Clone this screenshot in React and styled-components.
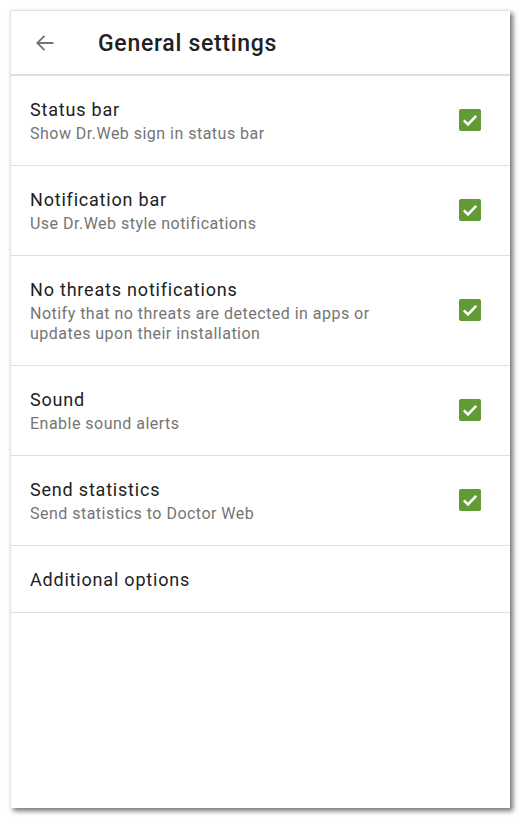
import React from "react";
import styled, { createGlobalStyle } from "styled-components";

const GlobalStyle = createGlobalStyle`
  html, body {
    margin: 0;
    padding: 0;
    background: #ffffff;
  }
  body {
    font-family: Roboto, "Noto Sans", sans-serif;
  }
`;

const Page = styled.div`
  padding: 10px 11px 11px 10px;
`;

const Panel = styled.div`
  box-sizing: border-box;
  width: 500px;
  height: 798px;
  background: #fff;
  border-top: 1px solid #e2e2e2;
  border-left: 1px solid #e2e2e2;
  box-shadow: 3px 3px 5px rgba(0, 0, 0, 0.55);
  display: flex;
  flex-direction: column;
`;

const Header = styled.header`
  box-sizing: border-box;
  height: 65px;
  padding-top: 1px;
  display: flex;
  align-items: center;
  border-bottom: 2px solid #dedede;
`;

const BackButton = styled.button`
  border: 0;
  background: none;
  padding: 0;
  margin: 0 0 0 21px;
  width: 26px;
  height: 26px;
  display: flex;
  align-items: center;
  justify-content: center;
  color: #757575;
`;

const Title = styled.h1`
  margin: 0 0 0 40px;
  font-size: 23px;
  font-weight: 500;
  color: #212121;
  letter-spacing: 0.7px;
`;

const Row = styled.div`
  display: flex;
  align-items: center;
  padding: 20px 29px ${(p) => (p.$compact ? "18px" : "21px")} 19px;
  border-bottom: 1px solid #e0e0e0;
`;

const Texts = styled.div`
  flex: 1;
  padding-right: 60px;
`;

const ItemTitle = styled.div`
  font-size: 18px;
  line-height: 28px;
  color: #212121;
  letter-spacing: 0.8px;
`;

const ItemSub = styled.div`
  font-size: 16px;
  line-height: 20px;
  color: #757575;
  letter-spacing: 0.48px;
`;

const Check = () => (
  <svg width="22" height="22" viewBox="0 0 22 22">
    <rect x="0" y="0" width="22" height="22" rx="2" fill="#629a35" />
    <path
      d="M4.8 11.4 L9 15.4 L17.2 6.8"
      fill="none"
      stroke="#fff"
      strokeWidth="2.6"
    />
  </svg>
);

const items = [
  { title: "Status bar", sub: "Show Dr.Web sign in status bar" },
  { title: "Notification bar", sub: "Use Dr.Web style notifications" },
  {
    title: "No threats notifications",
    sub: "Notify that no threats are detected in apps or updates upon their installation",
  },
  { title: "Sound", sub: "Enable sound alerts" },
  { title: "Send statistics", sub: "Send statistics to Doctor Web" },
];

export default function App() {
  return (
    <Page>
      <GlobalStyle />
      <Panel>
        <Header>
          <BackButton aria-label="Back">
            <svg width="24" height="24" viewBox="0 0 24 24">
              <path
                d="M20.5 12 H4.5 M11.5 4.8 L4.3 12 L11.5 19.2"
                fill="none"
                stroke="currentColor"
                strokeWidth="1.9"
              />
            </svg>
          </BackButton>
          <Title>General settings</Title>
        </Header>
        {items.map((it) => (
          <Row key={it.title}>
            <Texts>
              <ItemTitle>{it.title}</ItemTitle>
              <ItemSub>{it.sub}</ItemSub>
            </Texts>
            <Check />
          </Row>
        ))}
        <Row $compact>
          <Texts>
            <ItemTitle>Additional options</ItemTitle>
          </Texts>
        </Row>
      </Panel>
    </Page>
  );
}
